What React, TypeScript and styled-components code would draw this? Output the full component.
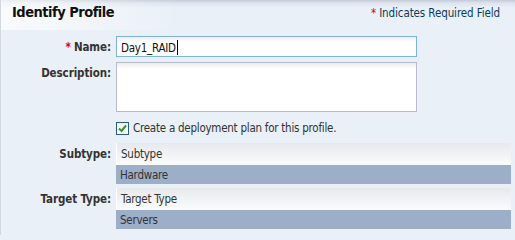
import styled, { createGlobalStyle } from "styled-components"

const GlobalStyle = createGlobalStyle`
  html, body {
    margin: 0;
    padding: 0;
    background: #eaf0f8;
  }
  * {
    box-sizing: border-box;
  }
`

const Panel = styled.div`
  width: 515px;
  height: 235px;
  overflow: hidden;
  background: #eaf0f8;
  border-left: 1px solid #d2d8e0;
  font-family: "DejaVu Sans Condensed", "DejaVu Sans", sans-serif;
  font-size: 11.5px;
  letter-spacing: -0.25px;
  color: #333;
`

const Header = styled.div`
  height: 30px;
  display: flex;
  align-items: flex-start;
  justify-content: space-between;
  padding: 3px 15px 0 11px;
  background:
    linear-gradient(to right, rgba(255, 255, 255, 0.7), rgba(255, 255, 255, 0) 35%),
    linear-gradient(to bottom, #c3cad5 0, #dde4ee 3px, #eaf0f8 8px);
`

const Title = styled.h1`
  margin: 0;
  font-size: 14.5px;
  font-weight: bold;
  letter-spacing: -0.5px;
  color: #111;
  line-height: 18px;
`

const Required = styled.div`
  font-size: 11.5px;
  line-height: 18px;
  letter-spacing: -0.1px;
  color: #0b3b5b;
  padding-top: 1px;
`

const Star = styled.span`
  color: #e00000;
  margin-right: 3px;
`

const Form = styled.div`
  display: flex;
  flex-direction: column;
  padding-top: 6px;
`

const Row = styled.div<{ $gap?: number; $top?: boolean }>`
  display: grid;
  grid-template-columns: 110px 1fr;
  column-gap: 5px;
  align-items: ${(p) => (p.$top ? "start" : "center")};
  margin-bottom: ${(p) => p.$gap ?? 0}px;
`

const Label = styled.label<{ $pad?: number }>`
  text-align: right;
  font-size: 11.5px;
  font-weight: bold;
  letter-spacing: -0.1px;
  color: #333;
  white-space: nowrap;
  padding-top: ${(p) => p.$pad ?? 0}px;
`

const TextInput = styled.div`
  width: 301px;
  height: 21px;
  border: 1px solid #7eb2e2;
  background: linear-gradient(to bottom, #eeeeee 0, #ffffff 5px);
  color: #111;
  padding: 2px 0 0 4px;
  line-height: 16px;
  display: flex;
  align-items: center;
`

const Caret = styled.span`
  display: inline-block;
  width: 1px;
  height: 15px;
  background: #000;
  margin-left: 1px;
`

const TextArea = styled.div`
  width: 301px;
  height: 50px;
  border: 1px solid #b6bccb;
  background: linear-gradient(to bottom, #ececec 0, #ffffff 6px);
`

const CheckRow = styled.div`
  display: flex;
  align-items: center;
  gap: 4px;
  color: #333;
`

const Box = styled.span`
  width: 13px;
  height: 13px;
  border: 1px solid #2a5a86;
  background: linear-gradient(to bottom, #f2f2f2, #ffffff);
  display: flex;
  align-items: center;
  justify-content: center;
`

const List = styled.div`
  width: 395px;
  display: flex;
  flex-direction: column;
`

const ListHead = styled.div`
  height: 22px;
  border-left: 1px solid #ffffff;
  background: linear-gradient(to bottom, #e6e9ed, #fbfbfc);
  color: #333;
  padding-left: 4px;
  display: flex;
  align-items: center;
`

const ListItem = styled.div`
  height: 19px;
  background: #9daec9;
  color: #333;
  padding-left: 4px;
  display: flex;
  align-items: center;
`

export default function App() {
  return (
    <>
      <GlobalStyle />
      <Panel>
        <Header>
          <Title>Identify Profile</Title>
          <Required>
            <Star>*</Star>Indicates Required Field
          </Required>
        </Header>
        <Form>
          <Row $gap={5}>
            <Label>
              <Star>*</Star>Name:
            </Label>
            <TextInput>
              Day1_RAID<Caret />
            </TextInput>
          </Row>
          <Row $gap={9} $top>
            <Label $pad={4}>Description:</Label>
            <TextArea />
          </Row>
          <Row $gap={8}>
            <span />
            <CheckRow>
              <Box>
                <svg width="9" height="9" viewBox="0 0 9 9">
                  <path d="M1 4.5 L3.5 7 L8 1.5" fill="none" stroke="#2f9b2f" strokeWidth="2" />
                </svg>
              </Box>
              Create a deployment plan for this profile.
            </CheckRow>
          </Row>
          <Row $gap={4} $top>
            <Label $pad={4}>Subtype:</Label>
            <List>
              <ListHead>Subtype</ListHead>
              <ListItem>Hardware</ListItem>
            </List>
          </Row>
          <Row $top>
            <Label $pad={4}>Target Type:</Label>
            <List>
              <ListHead>Target Type</ListHead>
              <ListItem>Servers</ListItem>
            </List>
          </Row>
        </Form>
      </Panel>
    </>
  )
}
